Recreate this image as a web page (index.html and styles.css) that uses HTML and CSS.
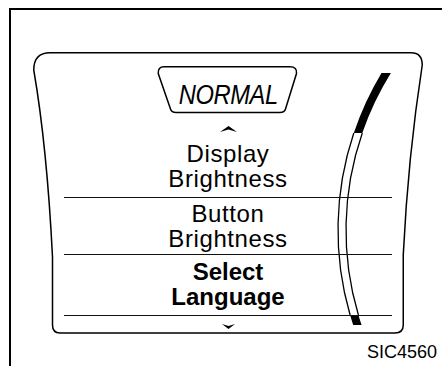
FILE: index.html
```html
<!DOCTYPE html>
<html>
<head>
<meta charset="utf-8">
<link rel="stylesheet" href="styles.css">
</head>
<body>
<div class="frame">
  <div class="display">
    <svg class="outline" width="390" height="282" viewBox="0 0 390 282">
      <path class="edge" d="M17 0.75 H378 Q389.25 0.75 389.25 13 Q375 105 370.25 203 V273 Q370.25 281 362 281 H27 Q19.5 281 19.5 273 V205 Q14 95 0.75 18 Q0.75 0.75 17 0.75 Z"/>
      <path class="fill" d="M348.5 21 H357.9 A297 297 0 0 0 329.3 81 H320.8 A305 305 0 0 1 348.5 21 Z"/>
      <path class="thin" d="M320.8 81 A305 305 0 0 0 317.1 263"/>
      <path class="thin" d="M329.3 81 A297 297 0 0 0 325.4 263"/>
      <path class="fill" d="M317.1 263 A305 305 0 0 0 320.2 273 H328.6 A297 297 0 0 1 325.4 263 Z"/>
    </svg>
    <div class="menu">
      <div class="tab">
        <svg class="tab-shape" width="141" height="48" viewBox="0 0 141 48">
          <path d="M7 0.75 H133 Q140.25 0.75 139.5 7.5 L128.5 43 Q127.5 46.5 123 46.5 H19 Q14.5 46.5 13.5 43 L1.25 7.5 Q0.75 0.75 7 0.75 Z"/>
        </svg>
        <span class="tab-label">NORMAL</span>
      </div>
      <svg class="arrow arrow-up" width="17" height="6" viewBox="0 0 17 6">
        <path d="M0 6 L8.5 0 L17 6 L8.5 3.6 Z"/>
      </svg>
      <div class="item item-first">Display<br>Brightness</div>
      <div class="item">Button<br>Brightness</div>
      <div class="item item-selected">Select<br>Language</div>
      <svg class="arrow arrow-down" width="13" height="5" viewBox="0 0 13 5">
        <path d="M0 0 L6.5 2 L13 0 L6.5 5 Z"/>
      </svg>
    </div>
  </div>
  <div class="caption">SIC4560</div>
</div>
</body>
</html>
```

FILE: styles.css
```css
html, body {
  margin: 0;
  padding: 0;
  background: #fff;
  overflow: hidden;
}

body {
  width: 442px;
  height: 368px;
  font-family: "Liberation Sans", Arial, sans-serif;
  color: #000;
}

.frame {
  margin: 8px 0 0 9px;
  height: 358px;
  box-sizing: border-box;
  border-left: 2px solid #000;
  border-top: 2px solid #000;
}

.display {
  position: relative;
  margin: 42px 0 0 22px;
  width: 390px;
  height: 282px;
}

.outline {
  position: absolute;
  left: 0;
  top: 0;
}

.outline .edge {
  fill: none;
  stroke: #000;
  stroke-width: 1.5;
}

.outline .fill {
  fill: #000;
}

.outline .thin {
  fill: none;
  stroke: #000;
  stroke-width: 1.3;
}

.menu {
  position: relative;
  margin-left: 31px;
  width: 328px;
  padding-top: 14px;
  display: flex;
  flex-direction: column;
  align-items: stretch;
}

.tab {
  position: relative;
  align-self: center;
  width: 141px;
  height: 47px;
  box-sizing: border-box;
  margin-left: -2px;
  padding-top: 12px;
  text-align: center;
}

.tab-shape {
  position: absolute;
  left: 0;
  top: 0;
}

.tab-shape path {
  fill: none;
  stroke: #000;
  stroke-width: 1.5;
}

.tab-label {
  position: relative;
  display: inline-block;
  font-size: 27px;
  line-height: 35px;
  font-style: italic;
  letter-spacing: -0.5px;
  transform: scaleX(0.88);
  margin-left: 3px;
}

.arrow {
  display: block;
  align-self: center;
  fill: #000;
}

.arrow-up {
  margin-top: 13px;
}

.arrow-down {
  margin-top: 8px;
}

.item {
  font-size: 24px;
  line-height: 25px;
  letter-spacing: 0.6px;
  text-align: center;
  padding: 3px 0 3px;
  border-top: 1px solid #111;
}

.item-first {
  border-top: none;
  padding: 9px 0 6px;
}

.item-selected {
  font-weight: bold;
  letter-spacing: 0;
  padding: 4px 0 6px;
  border-bottom: 1px solid #111;
}

.caption {
  margin-top: 8px;
  padding-right: 5px;
  text-align: right;
  font-size: 18px;
  line-height: 20px;
}
```
